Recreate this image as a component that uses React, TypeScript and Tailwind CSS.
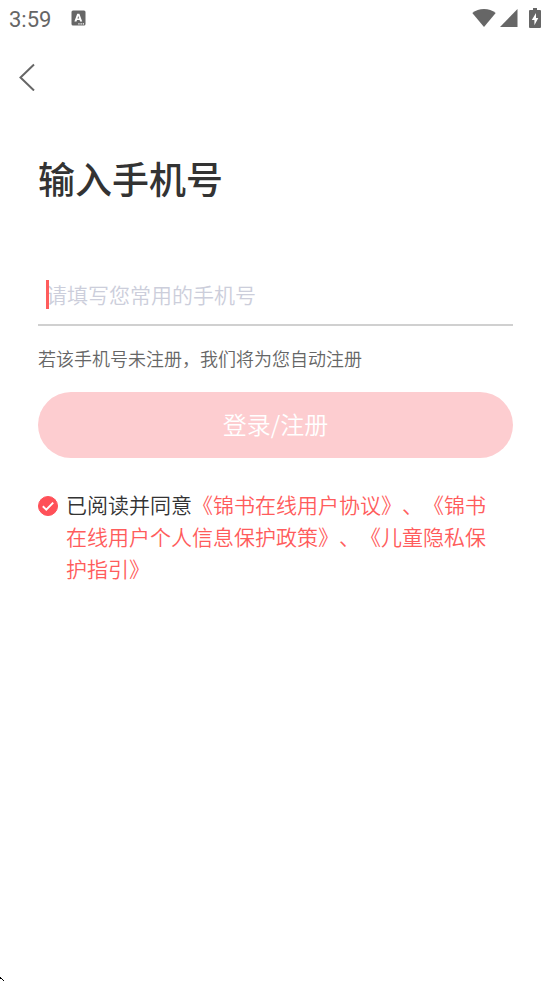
import React, { useState } from "react";

const agreements = ["《锦书在线用户协议》", "《锦书在线用户个人信息保护政策》", "《儿童隐私保护指引》"];

const StatusBar: React.FC = () => {
  return (
    <header className="flex h-9 items-center justify-between pl-[9px] pr-2.5 text-[#666666]">
      <div className="flex items-center gap-5">
        <span className="pt-1 font-[Roboto] text-[22px] font-normal leading-none">3:59</span>
        <svg className="h-4 w-[15px]" viewBox="0 0 15 16">
          <rect x="0.5" y="0.5" width="14" height="15" rx="1.5" fill="currentColor" />
          <path d="M3.4 11.5 6.2 3.8h2.2l2.8 7.7H9.1l-.5-1.5H6l-.5 1.5ZM6.5 8.5h1.6l-.8-2.4Z" fill="white" />
          <path d="M7.3 13.9h1.3M9.5 13.9h1.3M11.7 13.9H13" stroke="white" strokeWidth="1.2" />
        </svg>
      </div>

      <div className="flex items-center gap-1">
        <svg className="h-[18px] w-6" viewBox="0 0 24 18" fill="currentColor">
          <path d="M12 18 0.3 4C3.6 1.4 7.6 0 12 0s8.4 1.4 11.7 4Z" />
        </svg>
        <svg className="h-[18px] w-[18px]" viewBox="0 0 18 18" fill="currentColor">
          <path d="M17.5 0v18H0Z" />
        </svg>
        <svg className="ml-[7px] h-5 w-3" viewBox="0 0 12 20" fill="currentColor">
          <path d="M4 0h4v2h3a1 1 0 0 1 1 1v16a1 1 0 0 1-1 1H1a1 1 0 0 1-1-1V3a1 1 0 0 1 1-1h3Z" />
          <path d="M7 5 2.8 12h2.6v5.2L9.3 10H7Z" fill="white" />
        </svg>
      </div>
    </header>
  );
};

const App: React.FC = () => {
  const [phone, setPhone] = useState("");
  const [agreed, setAgreed] = useState(true);

  return (
    <div className="relative flex min-h-screen flex-col bg-white font-['Noto_Sans_CJK_SC',sans-serif] font-[350] text-[#333333]">
      <StatusBar />

      {/* Back */}
      <nav className="flex h-[82px] items-center px-[18px]">
        <button type="button" aria-label="返回" className="text-[#666666]">
          <svg className="h-7 w-[18px]" viewBox="0 0 18 28" fill="none" stroke="currentColor" strokeWidth="2">
            <path d="M16 1.5 2.5 14.5 16 27.5" />
          </svg>
        </button>
      </nav>

      <main className="px-[38px] pt-9">
        <h1 className="text-[37px] font-medium leading-[48px]">输入手机号</h1>

        {/* Phone number */}
        <form className="mt-16" onSubmit={(e) => e.preventDefault()}>
          <div className="relative border-b-2 border-[#d0d0d0]">
            <input
              type="tel"
              aria-label="手机号"
              value={phone}
              onChange={(e) => setPhone(e.target.value)}
              placeholder="请填写您常用的手机号"
              className="block h-[58px] w-full px-2 pb-0.5 text-[21px] caret-[#ff5c5c] outline-none placeholder:text-[#cccedb]"
            />
            {!phone && <span className="absolute left-2 top-[14px] h-[29px] w-[3px] bg-[#ff5c5c]" />}
          </div>

          <p className="mt-3.5 text-[18px] leading-9 text-[#666666]">若该手机号未注册，我们将为您自动注册</p>

          <button type="submit" className="mt-4 h-[66px] w-full rounded-full bg-[#fdcdd0] pb-0.5 text-2xl text-white">
            登录/注册
          </button>

          {/* Agreements */}
          <div className="mt-[30px] flex gap-2 pr-3">
            <span className="relative mt-2 h-5 w-5 shrink-0">
              <input
                id="agree"
                type="checkbox"
                checked={agreed}
                onChange={(e) => setAgreed(e.target.checked)}
                className="block h-5 w-5 appearance-none rounded-full border border-[#ff5058] checked:bg-[#ff5058]"
              />
              {agreed && (
                <svg className="pointer-events-none absolute inset-0 h-5 w-5" viewBox="0 0 20 20" fill="none" stroke="white" strokeWidth="2">
                  <path d="m4.8 10.2 3.5 3.4 6.9-7" />
                </svg>
              )}
            </span>
            <p className="text-[21px] leading-8 text-[#ff5c5c] [text-spacing-trim:space-all]">
              <label htmlFor="agree" className="text-[#333333]">
                已阅读并同意
              </label>
              {agreements.map((name, index) => (
                <React.Fragment key={name}>
                  {index > 0 && "、"}
                  <a href="#">{name}</a>
                </React.Fragment>
              ))}
            </p>
          </div>
        </form>
      </main>

      {/* Pointer edge in the corner */}
      <svg className="absolute bottom-0 left-0 h-[5px] w-[5px]" viewBox="0 0 5 5" fill="black">
        <path d="M0 1h1v1H0ZM0 2h2v1H0ZM2 3h1v1H2ZM3 4h1v1H3Z" />
      </svg>
    </div>
  );
};

export default App;
